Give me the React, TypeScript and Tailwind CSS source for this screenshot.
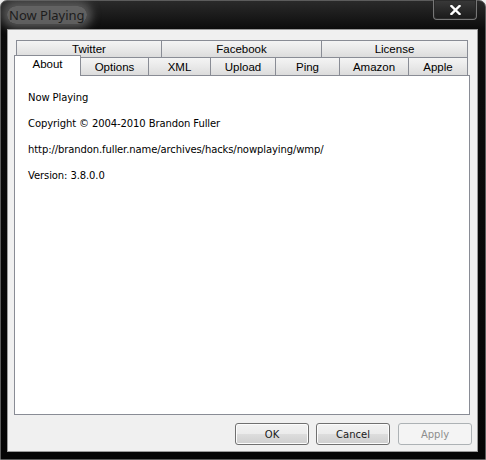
import React from 'react';

const upperTabs = [
  { label: 'Twitter', w: 'w-[146px]' },
  { label: 'Facebook', w: 'w-[160px]' },
  { label: 'License', w: 'w-[146px]' },
];

const lowerTabs = [
  { label: 'Options', w: 'w-[68px]' },
  { label: 'XML', w: 'w-[62px]' },
  { label: 'Upload', w: 'w-[65px]' },
  { label: 'Ping', w: 'w-[64px]' },
  { label: 'Amazon', w: 'w-[69px]' },
  { label: 'Apple', w: 'w-[59px]' },
];

const lines = [
  'Now Playing',
  'Copyright © 2004-2010 Brandon Fuller',
  'http://brandon.fuller.name/archives/hacks/nowplaying/wmp/',
  'Version: 3.8.0.0',
];

function Button({ label, disabled }: { label: string; disabled?: boolean }) {
  return (
    <div
      className={
        disabled
          ? 'flex h-[22px] w-[74px] items-center justify-center rounded-[3px] border border-[#adb2b5] bg-[#f4f4f4] text-[#8d8d8d]'
          : 'flex h-[22px] w-[74px] items-center justify-center rounded-[3px] border border-[#707070] bg-[linear-gradient(to_bottom,#f2f2f2_0%,#ebebeb_50%,#dddddd_50%,#cfcfcf_100%)] text-[#1a1a1a] shadow-[inset_0_0_0_1px_#fcfcfc]'
      }
    >
      {label}
    </div>
  );
}

export default function App() {
  return (
    <div className="h-[460px] w-[486px] overflow-hidden bg-[#f0f0f0]">
      <div className="flex h-[460px] w-[486px] flex-col rounded-t-[7px] border border-[#5c5c5c] bg-[linear-gradient(to_bottom,#2a2a2a_0px,#0c0c0c_28px,#050505_100%)]">
        {/* title bar */}
        <div className="flex h-[28px] justify-between">
          <div className="flex items-center pl-[6px]">
            <span className="rounded-[10px] bg-[rgba(120,120,120,0.75)] px-[2px] font-['Noto_Sans',sans-serif] text-[13px] leading-[18px] text-[#1c1c1c] shadow-[0_0_8px_5px_rgba(110,110,110,0.7)]">
              Now Playing
            </span>
          </div>
          <div className="mr-[8px] flex h-[20px] w-[44px] -translate-y-px items-center justify-center rounded-b-[4px] border border-t-0 border-[#777] bg-[linear-gradient(to_bottom,#3a3a3a,#1a1a1a)] shadow-[inset_0_0_0_1px_#2a2a2a]">
            <svg width="11" height="10" viewBox="0 0 11 10">
              <path d="M1.5 1 L9.5 9 M9.5 1 L1.5 9" stroke="#fff" strokeWidth="2.4" strokeLinecap="square" />
            </svg>
          </div>
        </div>

        {/* client area */}
        <div className="ml-[6px] flex h-[423px] w-[471px] flex-col border border-[#9a9a9a] bg-[#f0f0f0] pl-[6px] pt-[10px] font-['Liberation_Sans',Arial,sans-serif] text-[11.5px] text-black">
          <div className="w-[456px]">
            <div className="ml-[2px] flex h-[17px]">
              {upperTabs.map((t, i) => (
                <div
                  key={t.label}
                  className={`${t.w} ${i === 0 ? 'border-l' : ''} flex h-[17px] items-center justify-center border-r border-t border-[#898c95] bg-[linear-gradient(to_bottom,#f4f4f4,#e9e9e9_50%,#dcdcdc)] pt-px leading-none`}
                >
                  {t.label}
                </div>
              ))}
            </div>
            <div className="flex h-[18px] items-end">
              <div className="relative z-10 -mb-px flex h-[21px] w-[67px] items-start justify-center border border-b-0 border-[#898c95] bg-white pt-[3px] leading-none">
                About
              </div>
              {lowerTabs.map((t) => (
                <div
                  key={t.label}
                  className={`${t.w} flex h-[18px] items-center justify-center border-r border-t border-[#898c95] bg-[linear-gradient(to_bottom,#f4f4f4,#e9e9e9_50%,#dcdcdc)] pt-[2px] leading-none`}
                >
                  {t.label}
                </div>
              ))}
            </div>
            <div className="h-[340px] border border-[#898c95] bg-white pl-[13px] pt-[9px] font-['DejaVu_Sans',Tahoma,sans-serif] text-[10px] tracking-[-0.1px]">
              {lines.map((l) => (
                <div key={l} className="h-[26px] leading-[26px]">
                  {l}
                </div>
              ))}
            </div>
          </div>
          <div className="mt-[8px] flex justify-end gap-[7px] pr-[5px] font-['DejaVu_Sans',Tahoma,sans-serif] text-[10px]">
            <Button label="OK" />
            <Button label="Cancel" />
            <div className="ml-px">
              <Button label="Apply" disabled />
            </div>
          </div>
        </div>
      </div>
    </div>
  );
}
